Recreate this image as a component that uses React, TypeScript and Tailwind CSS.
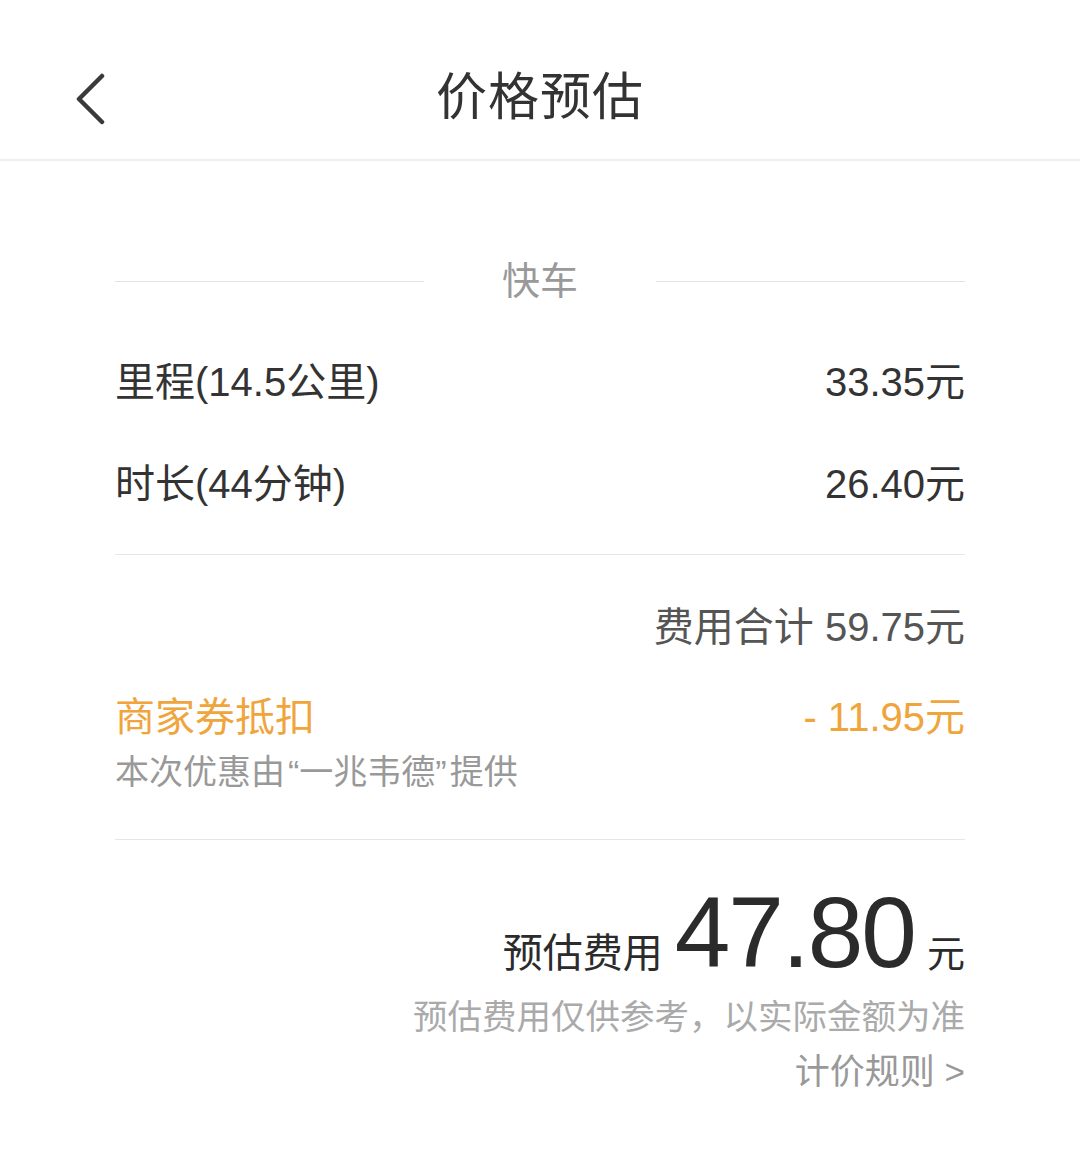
import React from 'react';

const font = "font-['Liberation_Sans','Noto_Sans_CJK_SC',sans-serif]";

const BackIcon: React.FC = () => (
  <svg width="34" height="52" viewBox="0 0 34 52" fill="none">
    <polyline points="29,3 6,26 29,49" stroke="#3a3a3a" strokeWidth="4.5" strokeLinecap="round" strokeLinejoin="round" />
  </svg>
);

const Row: React.FC<{ label: string; value: string }> = ({ label, value }) => (
  <div className="flex h-[102px] items-center justify-between text-[40px] text-[#333]">
    <span>{label}</span>
    <span>{value}</span>
  </div>
);

const App: React.FC = () => {
  return (
    <div className={`min-h-[1161px] w-[1080px] bg-white ${font}`}>
      <header className="grid h-[161px] grid-cols-[1fr_auto_1fr] items-center border-b-2 border-[#eeeeee] pt-[38px]">
        <div className="pl-[73px]">
          <BackIcon />
        </div>
        <h1 className="text-[51px] font-normal text-[#333] tracking-[1px]">价格预估</h1>
        <div />
      </header>

      <main className="px-[115px]">
        <div className="mt-[90px] flex h-[60px] items-center">
          <div className="h-px flex-1 bg-[#e2e2e2]" />
          <span className="px-[78px] text-[38px] text-[#999]">快车</span>
          <div className="h-px flex-1 bg-[#e2e2e2]" />
        </div>

        <div className="mt-[20px]">
          <Row label="里程(14.5公里)" value="33.35元" />
          <Row label="时长(44分钟)" value="26.40元" />
        </div>

        <div className="mt-[19px] h-px bg-[#e6e6e6]" />

        <div className="mt-[42px] flex h-[60px] items-center justify-end text-[40px] text-[#555]">
          费用合计 59.75元
        </div>

        <div className="mt-[35px] flex h-[50px] items-center justify-between text-[40px] text-[#f0a43c]">
          <span>商家券抵扣</span>
          <span>- 11.95元</span>
        </div>
        <div className="mt-[10px] flex h-[40px] items-center text-[34px] text-[#999]">
          本次优惠由<span className="ml-[3px]">“</span>一兆韦德<span className="mr-[3px]">”</span>提供
        </div>

        <div className="mt-[47px] h-px bg-[#e6e6e6]" />

        <div className="mt-[42px] flex items-baseline justify-end leading-none text-[#2b2b2b]">
          <span className="text-[40px]">预估费用</span>
          <span className="ml-[12px] text-[100px] tracking-[-2px]">47.80</span>
          <span className="ml-[12px] text-[38px]">元</span>
        </div>

        <div className="mt-[13px] flex h-[45px] items-center justify-end text-[34.5px] text-[#aaa]">
          预估费用仅供参考，以实际金额为准
        </div>
        <div className="mt-[10px] flex h-[45px] items-center justify-end text-[35px] text-[#999]">
          计价规则 &gt;
        </div>
      </main>
    </div>
  );
};

export default App;
